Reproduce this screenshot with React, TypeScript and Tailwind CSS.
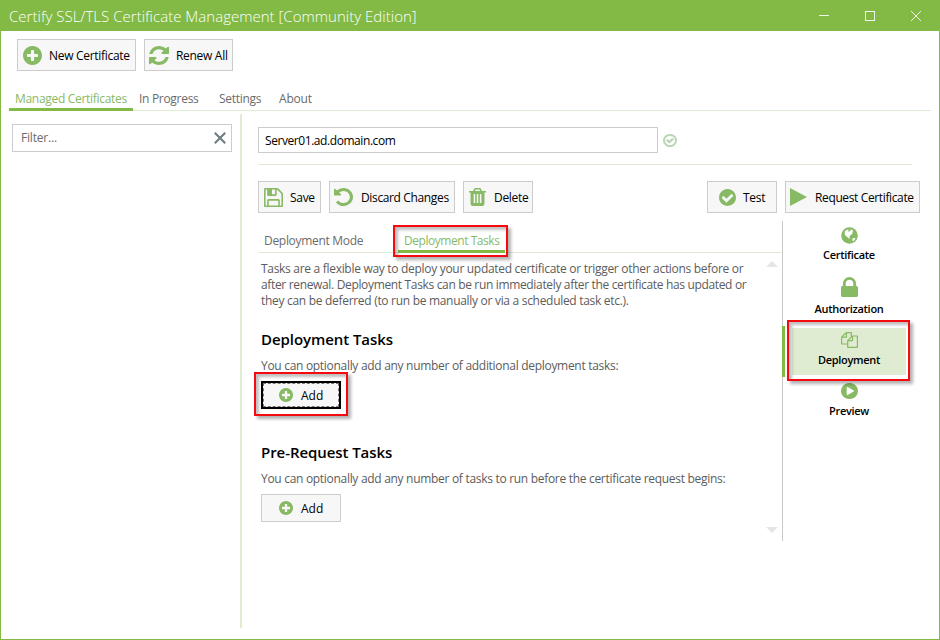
import React from "react";

const ring =
  "q0 209-103 385.5t-279.5 279.5-385.5 103-385.5-103-279.5-279.5-103-385.5 103-385.5 279.5-279.5 385.5-103 385.5 103 279.5 279.5 103 385.5z";

const paths = {
  plus:
    "M1344 960v-128q0-26-19-45t-45-19h-256v-256q0-26-19-45t-45-19h-128q-26 0-45 19t-19 45v256h-256q-26 0-45 19t-19 45v128q0 26 19 45t45 19h256v256q0 26 19 45t45 19h128q26 0 45-19t19-45v-256h256q26 0 45-19t19-45zm320-64" +
    ring,
  refresh:
    "M1639 1056q0 5-1 7-64 268-268 434.5t-478 166.5q-146 0-282.5-55t-243.5-157l-129 129q-19 19-45 19t-45-19-19-45v-448q0-26 19-45t45-19h448q26 0 45 19t19 45-19 45l-137 137q71 66 161 102t187 36q134 0 250-65t186-179q11-17 53-117 8-23 30-23h192q13 0 22.5 9.5t9.5 22.5zm25-800v448q0 26-19 45t-45 19h-448q-26 0-45-19t-19-45 19-45l138-138q-148-137-349-137-134 0-250 65t-186 179q-11 17-53 117-8 23-30 23h-199q-13 0-22.5-9.5t-9.5-22.5v-7q65-268 270-434.5t480-166.5q146 0 284 55.5t245 156.5l130-129q19-19 45-19t45 19 19 45z",
  save:
    "M512 1536h768v-384h-768v384zm896 0h128v-896q0-14-10-38.5t-20-34.5l-281-281q-10-10-34-20t-39-10v416q0 40-28 68t-68 28h-576q-40 0-68-28t-28-68v-416h-128v1280h128v-416q0-40 28-68t68-28h832q40 0 68 28t28 68v416zm-384-928v-320q0-13-9.5-22.5t-22.5-9.5h-192q-13 0-22.5 9.5t-9.5 22.5v320q0 13 9.5 22.5t22.5 9.5h192q13 0 22.5-9.5t9.5-22.5zm640 32v928q0 40-28 68t-68 28h-1344q-40 0-68-28t-28-68v-1344q0-40 28-68t68-28h928q40 0 88 20t76 48l280 280q28 28 48 76t20 88z",
  undo:
    "M1664 896q0 156-61 298t-164 245-245 164-298 61q-172 0-327-72.5t-264-204.5q-7-10-6.5-22.5t8.5-20.5l137-138q10-9 25-9 16 2 23 12 73 95 179 147t225 52q104 0 198.5-40.5t163.5-109.5 109.5-163.5 40.5-198.5-40.5-198.5-109.5-163.5-163.5-109.5-198.5-40.5q-98 0-188 35.5t-160 101.5l137 138q31 30 14 69-17 40-59 40h-448q-26 0-45-19t-19-45v-448q0-42 40-59 39-17 69 14l130 129q107-101 244.5-156.5t284.5-55.5q156 0 298 61t245 164 164 245 61 298z",
  trash:
    "M704 1376v-704q0-14-9-23t-23-9h-64q-14 0-23 9t-9 23v704q0 14 9 23t23 9h64q14 0 23-9t9-23zm256 0v-704q0-14-9-23t-23-9h-64q-14 0-23 9t-9 23v704q0 14 9 23t23 9h64q14 0 23-9t9-23zm256 0v-704q0-14-9-23t-23-9h-64q-14 0-23 9t-9 23v704q0 14 9 23t23 9h64q14 0 23-9t9-23zm-544-992h448l-48-117q-7-9-17-11h-317q-10 2-17 11zm928 32v64q0 14-9 23t-23 9h-96v948q0 83-47 143.5t-113 60.5h-832q-66 0-113-58.5t-47-141.5v-952h-96q-14 0-23-9t-9-23v-64q0-14 9-23t23-9h309l70-167q15-37 54-63t79-26h320q40 0 79 26t54 63l70 167h309q14 0 23 9t9 23z",
  check:
    "M1412 734q0-28-18-46l-91-90q-19-19-45-19t-45 19l-408 407-226-226q-19-19-45-19t-45 19l-91 90q-18 18-18 46 0 27 18 45l362 362q19 19 45 19 27 0 46-19l543-543q18-18 18-45zm252 162" +
    ring,
  checkOutline:
    "M1299 813l-422 422q-19 19-45 19t-45-19l-294-294q-19-19-19-45t19-45l102-102q19-19 45-19t45 19l147 147 275-275q19-19 45-19t45 19l102 102q19 19 19 45t-19 45zm141 83q0-148-73-273t-198-198-273-73-273 73-198 198-73 273 73 273 198 198 273 73 273-73 198-198 73-273zm224 0" +
    ring,
  play: "M1664 896L128 1700V92z",
  lock:
    "M640 768h512v-192q0-106-75-181t-181-75-181 75-75 181v192zm832 96v576q0 40-28 68t-68 28h-960q-40 0-68-28t-28-68v-576q0-40 28-68t68-28h32v-192q0-184 132-316t316-132 316 132 132 316v192h32q40 0 68 28t28 68z",
  copy:
    "M1696 384q40 0 68 28t28 68v1216q0 40-28 68t-68 28h-960q-40 0-68-28t-28-68v-288h-544q-40 0-68-28t-28-68v-672q0-40 20-88t48-76l408-408q28-28 76-48t88-20h416q40 0 68 28t28 68v328q68-40 128-40h416zm-544 213l-299 299h299v-299zm-640-384l-299 299h299v-299zm196 647l316-316v-416h-384v416q0 40-28 68t-68 28h-416v640h512v-256q0-40 20-88t48-76zm956 804v-1152h-384v416q0 40-28 68t-68 28h-416v640h896z",
  playCircle:
    "M896 128q209 0 385.5 103t279.5 279.5 103 385.5-103 385.5-279.5 279.5-385.5 103-385.5-103-279.5-279.5-103-385.5 103-385.5 279.5-279.5 385.5-103zm384 823q32-18 32-55t-32-55l-544-320q-31-19-64-1-32 19-32 55v640q0 36 32 55 16 8 32 8 17 0 32-9z",
};

function Icon({
  name,
  box = "128 128 1536 1536",
  className,
}: {
  name: keyof typeof paths;
  box?: string;
  className: string;
}) {
  return (
    <svg viewBox={box} preserveAspectRatio="none" fill="currentColor" className={`shrink-0 ${className}`}>
      <path d={paths[name]} />
    </svg>
  );
}

function Globe() {
  return (
    <svg viewBox="0 0 17 17" className="h-[17px] w-[17px] shrink-0">
      <circle cx="8.5" cy="8.5" r="8.3" fill="#88b964" />
      <path
        d="M3.8 4.6 5 3.2l1.9-.7.9.5-.8 1.1.9.7 1.3-.7.5-1.5 1.6.2.7 1-.5 1.4-.2 1.7-1.7 1.2-1.1 1.5.2 1.6-.9.2-1.5-1.5-1.8-1.2-.8-1.9zM11.4 11.6l1.6-.6 1.5.2-.9 1.7-1.6 1.4-.6-.8z"
        fill="#fff"
      />
    </svg>
  );
}

function ToolButton({
  icon,
  className,
  children,
}: {
  icon: React.ReactNode;
  className: string;
  children: React.ReactNode;
}) {
  return (
    <button
      className={`flex h-8 shrink-0 items-center border border-[#cccccc] bg-[#f7f7f7] text-black whitespace-nowrap ${className}`}
    >
      {icon}
      <span className="pt-0.5">{children}</span>
    </button>
  );
}

function Highlight({ className }: { className: string }) {
  return (
    <div
      className={`pointer-events-none absolute border-2 border-[#f50a0f] shadow-[3px_3px_3px_rgba(0,0,0,0.3),inset_3px_3px_3px_rgba(0,0,0,0.25)] ${className}`}
    />
  );
}

function TitleBar() {
  return (
    <header className="flex h-[31px] shrink-0 items-center bg-[#82ba45] pl-[9px] text-white">
      <h1 className="flex-1 pt-0.5 text-[15px] leading-[29px] font-light tracking-[0.02px]">
        Certify SSL/TLS Certificate Management [Community Edition]
      </h1>
      <svg viewBox="0 0 104 12" className="mr-[18px] h-3 w-[104px]" fill="none" stroke="#eef6e6" shapeRendering="crispEdges">
        <path d="M1 5.5h10M47.5 1.5h9v9h-9z" />
        <path d="M93 1l10 10M103 1l-10 10" shapeRendering="auto" />
      </svg>
    </header>
  );
}

export default function App() {
  return (
    <div className="relative flex h-[640px] w-[940px] flex-col overflow-hidden bg-white font-['Open_Sans','Noto_Sans',sans-serif] text-[12px] leading-4 tracking-[-0.3px] text-[#6b6b6b]">
      <TitleBar />
      <div className="flex min-h-0 flex-1 flex-col border-x border-b border-[#82ba45]">
        <div className="flex gap-2 pt-2 pl-4">
          <ToolButton
            className="w-[119px] gap-[7px] pl-[5px]"
            icon={<Icon name="plus" className="h-[19px] w-[19px] text-[#88b964]" />}
          >
            New Certificate
          </ToolButton>
          <ToolButton
            className="w-[89px] gap-[7px] pl-1"
            icon={<Icon name="refresh" className="h-[19px] w-5 text-[#88b964]" />}
          >
            Renew All
          </ToolButton>
        </div>

        <nav className="mt-4 mr-2 ml-2 flex h-6 items-start border-b border-[#dfecd1] leading-[23px]">
          <span className="h-6 w-[124px] shrink-0 border-b-[3px] border-[#82ba45] pl-1.5 whitespace-nowrap text-[#88b964]">
            Managed Certificates
          </span>
          <span className="w-20 pl-1.5 whitespace-nowrap">In Progress</span>
          <span className="w-[60px] pl-1.5">Settings</span>
          <span className="pl-1.5 tracking-[-0.2px]">About</span>
        </nav>

        <main className="flex min-h-0 flex-1">
          <aside className="w-[239px] shrink-0 pt-[13px] pl-[11px]">
            <div className="flex h-7 w-[220px] items-center justify-between border border-[#cccccc] pr-[5px] pl-2">
              <span className="tracking-[-0.2px]">Filter...</span>
              <svg viewBox="0 0 12 12" className="h-3 w-3" fill="none" stroke="#6f7d84" strokeWidth="2.1">
                <path d="M.8.8l10.4 10.4M11.2.8L.8 11.2" />
              </svg>
            </div>
          </aside>
          <div className="mt-[3px] mb-[11px] w-0.5 shrink-0 bg-[#dfecd1]" />

          <section className="flex min-w-0 flex-1 flex-col pt-4 pl-4">
            <div className="flex items-center gap-[5px]">
              <div className="h-[26px] w-[400px] border border-[#cccccc] pl-1.5 leading-[26px] tracking-[-0.43px] text-black">
                Server01.ad.domain.com
              </div>
              <Icon name="checkOutline" className="h-[13px] w-[14px] text-[#bad6b6]" />
            </div>
            <div className="mt-[11px] h-px w-[654px] bg-[#dfecd1]" />

            <div className="mt-4 flex w-[662px] gap-2">
              <ToolButton
                className="w-[63px] gap-[7px] pl-[5px]"
                icon={<Icon name="save" className="h-[19px] w-[19px] text-[#88b964]" />}
              >
                Save
              </ToolButton>
              <ToolButton
                className="w-[126px] gap-2 pl-1 tracking-[-0.36px]"
                icon={<Icon name="undo" className="h-[18px] w-[19px] text-[#88b964]" />}
              >
                Discard Changes
              </ToolButton>
              <ToolButton
                className="w-[70px] gap-2 pl-[5px]"
                icon={<Icon name="trash" box="192 128 1408 1536" className="h-[18px] w-[17px] text-[#88b964]" />}
              >
                Delete
              </ToolButton>
              <ToolButton
                className="ml-auto w-[70px] gap-[7px] pl-[11px]"
                icon={<Icon name="check" className="h-[17px] w-[17px] text-[#88b964]" />}
              >
                Test
              </ToolButton>
              <ToolButton
                className="w-[135px] gap-2 pl-1 tracking-[-0.37px]"
                icon={<Icon name="play" box="128 92 1536 1608" className="h-[18px] w-[17px] text-[#88b964]" />}
              >
                Request Certificate
              </ToolButton>
            </div>

            <div className="mt-2 flex h-80">
              <div className="flex w-[525px] shrink-0 flex-col border-r border-[#c9c9c9]">
                <div className="mt-[9px] flex h-[23px] items-start border-b border-[#dfecd1] leading-[21px]">
                  <span className="w-[140px] pl-1.5">Deployment Mode</span>
                  <span className="h-[23px] w-[107px] border-b-[3px] border-[#82ba45] pl-1.5 whitespace-nowrap text-[#88b964] tracking-[-0.45px]">
                    Deployment Tasks
                  </span>
                </div>
                <div className="flex min-h-0 flex-1">
                  <div className="flex-1 pt-2 pl-[3px] text-[#5c5c5c]">
                    <p className="w-[500px] whitespace-nowrap">
                      Tasks are a flexible way to deploy your updated certificate or trigger other actions before or
                      <br />
                      <span className="tracking-[-0.34px]">
                        after renewal. Deployment Tasks can be run immediately after the certificate has updated or
                      </span>
                      <br />
                      they can be deferred (to run be manually or via a scheduled task etc.).
                    </p>
                    <h2 className="mt-[19px] text-[15px] leading-[22px] font-semibold tracking-[-0.07px] text-black">
                      Deployment Tasks
                    </h2>
                    <p className="mt-2">You can optionally add any number of additional deployment tasks:</p>
                    <button className="mt-[7px] flex h-7 w-20 items-center gap-2 border-2 border-black bg-[#f7f7f7] p-px pl-4 tracking-normal text-black outline-1 -outline-offset-3 outline-dashed outline-[#777]">
                      <Icon name="plus" className="h-[14px] w-[14px] text-[#88b964]" />
                      <span className="pt-0.5">Add</span>
                    </button>
                    <h2 className="mt-8 text-[15px] leading-[22px] font-semibold tracking-[-0.07px] text-black">
                      Pre-Request Tasks
                    </h2>
                    <p className="mt-2">
                      You can optionally add any number of tasks to run before the certificate request begins:
                    </p>
                    <button className="mt-[7px] flex h-7 w-20 items-center gap-2 border border-[#cccccc] bg-[#f7f7f7] pl-[17px] tracking-normal text-black">
                      <Icon name="plus" className="h-[14px] w-[14px] text-[#88b964]" />
                      <span className="pt-0.5">Add</span>
                    </button>
                  </div>
                  <div className="flex w-4 shrink-0 flex-col justify-between pt-2 pb-2">
                    <svg viewBox="0 0 12 6" className="h-1.5 w-3" fill="#e5e5e5">
                      <path d="M0 6 6 0l6 6z" />
                    </svg>
                    <svg viewBox="0 0 12 6" className="h-1.5 w-3" fill="#e5e5e5">
                      <path d="M0 0h12L6 6z" />
                    </svg>
                  </div>
                </div>
              </div>

              <div className="-ml-px flex w-[133px] shrink-0 flex-col text-[11px] font-semibold text-black">
                <div className="flex h-[52px] flex-col items-center pt-1.5 pl-px">
                  <Globe />
                  <span className="mt-[3px]">Certificate</span>
                </div>
                <div className="flex h-[53px] flex-col items-center pt-1 pl-px">
                  <Icon name="lock" box="320 128 1152 1408" className="h-5 w-[17px] text-[#88b964]" />
                  <span className="mt-1">Authorization</span>
                </div>
                <div className="flex h-[51px] items-center border-l-[3px] border-[#82ba45] pl-[7px]">
                  <div className="flex h-[47px] w-[114px] flex-col items-center bg-[#dfecd1] pt-1">
                    <Icon name="copy" box="0 0 1792 1792" className="h-4 w-[17px] text-[#88b964]" />
                    <span className="mt-1">Deployment</span>
                  </div>
                </div>
                <div className="flex h-[50px] flex-col items-center pt-1.5 pl-px">
                  <Icon name="playCircle" className="h-4 w-[17px] text-[#88b964]" />
                  <span className="mt-1">Preview</span>
                </div>
              </div>
            </div>
          </section>
        </main>
      </div>

      <Highlight className="top-[225px] left-[393px] h-8 w-[115px]" />
      <Highlight className="top-[372px] left-[254px] h-11 w-[94px]" />
      <Highlight className="top-[320px] left-[787px] h-[61px] w-[123px]" />
    </div>
  );
}
